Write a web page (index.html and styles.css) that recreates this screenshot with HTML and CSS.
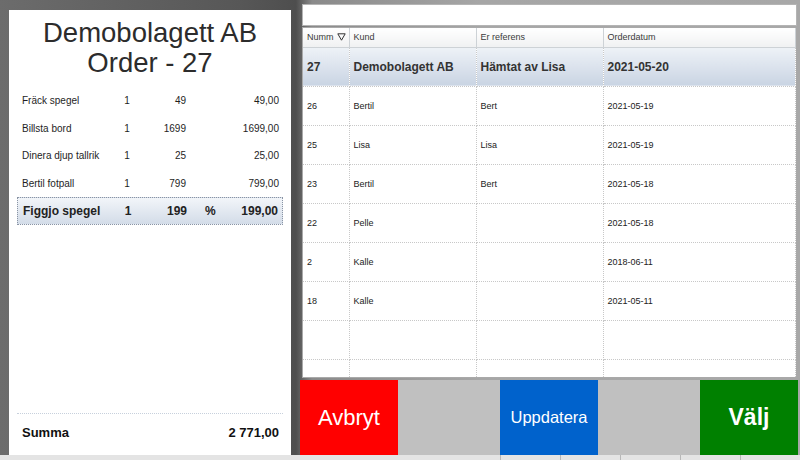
FILE: index.html
```html
<!DOCTYPE html>
<html lang="sv">
<head>
<meta charset="utf-8">
<title>Order</title>
<link rel="stylesheet" href="styles.css">
</head>
<body>
<div class="app">
  <section class="order">
    <h1 class="title">Demobolagett AB<br>Order - 27</h1>
    <div class="lines">
      <div class="line"><span class="name">Fräck spegel</span><span class="qty">1</span><span class="price">49</span><span class="pct"></span><span class="total">49,00</span></div>
      <div class="line"><span class="name">Billsta bord</span><span class="qty">1</span><span class="price">1699</span><span class="pct"></span><span class="total">1699,00</span></div>
      <div class="line"><span class="name">Dinera djup tallrik</span><span class="qty">1</span><span class="price">25</span><span class="pct"></span><span class="total">25,00</span></div>
      <div class="line"><span class="name">Bertil fotpall</span><span class="qty">1</span><span class="price">799</span><span class="pct"></span><span class="total">799,00</span></div>
      <div class="line active"><span class="name">Figgjo spegel</span><span class="qty">1</span><span class="price">199</span><span class="pct">%</span><span class="total">199,00</span></div>
    </div>
    <div class="sum"><span>Summa</span><span>2 771,00</span></div>
  </section>
  <section class="orders">
    <div class="search"></div>
    <div class="grid">
      <table>
        <colgroup><col class="c1"><col class="c2"><col class="c3"><col class="c4"></colgroup>
        <thead>
          <tr><th><span class="hd">Numm <svg class="filter" width="9" height="8" viewBox="0 0 9 8"><path d="M0.8 0.8 H8.2 L4.5 7.2 Z" fill="none" stroke="#333" stroke-width="1"/></svg></span></th><th>Kund</th><th>Er referens</th><th>Orderdatum</th></tr>
        </thead>
        <tbody>
          <tr class="sel"><td>27</td><td>Demobolagett AB</td><td>Hämtat av Lisa</td><td>2021-05-20</td></tr>
          <tr><td>26</td><td>Bertil</td><td>Bert</td><td>2021-05-19</td></tr>
          <tr><td>25</td><td>Lisa</td><td>Lisa</td><td>2021-05-19</td></tr>
          <tr><td>23</td><td>Bertil</td><td>Bert</td><td>2021-05-18</td></tr>
          <tr><td>22</td><td>Pelle</td><td></td><td>2021-05-18</td></tr>
          <tr><td>2</td><td>Kalle</td><td></td><td>2018-06-11</td></tr>
          <tr><td>18</td><td>Kalle</td><td></td><td>2021-05-11</td></tr>
          <tr><td></td><td></td><td></td><td></td></tr>
          <tr><td></td><td></td><td></td><td></td></tr>
        </tbody>
      </table>
    </div>
    <div class="buttons">
      <button class="btn cancel">Avbryt</button>
      <span class="spacer"></span>
      <button class="btn update">Uppdatera</button>
      <span class="spacer"></span>
      <button class="btn choose">Välj</button>
    </div>
  </section>
</div>
<div class="status"><span></span><span></span><span></span><span></span><span></span></div>
</body>
</html>
```

FILE: styles.css
```css
* { box-sizing: border-box; }
html, body { margin: 0; padding: 0; }
body {
  width: 800px;
  height: 460px;
  overflow: hidden;
  font-family: "Liberation Sans", Arial, sans-serif;
  color: #222;
  background: linear-gradient(90deg, #6c6c6c 0%, #575757 30%, #4e4e4e 37%, #8a8a8a 39%, #a6a6a6 60%, #a8a8a8 100%);
}
.app {
  display: flex;
  height: 455px;
}
.order {
  margin: 10px 0 0 9px;
  width: 282px;
  height: 445px;
  background: #fff;
  display: flex;
  flex-direction: column;
  padding: 0 8px;
}
.title {
  margin: 8px 0 9px;
  font-size: 27.5px;
  line-height: 30px;
  font-weight: normal;
  text-align: center;
  color: #2c2c2c;
}
.lines { display: flex; flex-direction: column; }
.line {
  display: grid;
  grid-template-columns: 95px 20px 49px 40px 1fr;
  height: 27.5px;
  align-items: center;
  padding: 0 4px 0 5px;
  font-size: 10px;
  color: #1e1e1e;
}
.line .qty { text-align: center; }
.line .price { text-align: right; }
.line .pct { padding-left: 18px; }
.line .total { text-align: right; }
.line.active {
  font-size: 12px;
  font-weight: bold;
  color: #222;
  border: 1px dotted #8a94a4;
  background: linear-gradient(#f2f5f9, #d3dce8);
}
.line.active .name { font-size: 12px; }
.sum {
  margin-top: auto;
  margin-bottom: 5px;
  height: 37px;
  border-top: 1px dotted #c7d0dc;
  display: flex;
  justify-content: space-between;
  align-items: center;
  padding: 0 4px 0 5px;
  font-size: 13px;
  font-weight: bold;
  color: #111;
}
.orders {
  margin-left: 9px;
  width: 500px;
  display: flex;
  flex-direction: column;
}
.search {
  margin: 4px 3px 0 2px;
  height: 22px;
  background: #fff;
  border: 1px solid #b4b4b4;
}
.grid {
  margin: 1px 3px 0 2px;
  height: 351px;
  background: #fff;
  border: 1px solid #a9a9a9;
  overflow: hidden;
}
table {
  width: 100%;
  border-collapse: collapse;
  table-layout: fixed;
}
col.c1 { width: 46px; }
col.c2 { width: 127px; }
col.c3 { width: 127px; }
th {
  height: 19px;
  padding: 0 0 0 4px;
  text-align: left;
  font-weight: normal;
  font-size: 9px;
  color: #3a3a3a;
  background: linear-gradient(#ffffff, #f0f1f2);
  border: 1px solid #cdd2d6;
  border-top: none;
}
th:first-child { border-left: none; }
th:last-child { border-right: 1px solid #cdd2d6; }
.hd { display: flex; align-items: center; justify-content: space-between; padding-right: 3px; }
.filter { display: block; }
td {
  height: 39px;
  padding: 0 0 0 4px;
  font-size: 9px;
  color: #222;
  border: 1px dotted #c8c8c8;
  white-space: nowrap;
  overflow: hidden;
}
td:first-child { border-left: none; }
tr.sel td {
  height: 39px;
  font-size: 12px;
  font-weight: bold;
  color: #333;
  background: linear-gradient(#eef2f7, #c9d4e3);
  border-top: none;
}
.buttons {
  margin-top: 2px;
  height: 75px;
  display: flex;
  background: #c0c0c0;
  margin-right: 2px;
}
.btn {
  border: none;
  margin: 0;
  width: 98px;
  height: 75px;
  color: #fff;
  font-family: "Liberation Sans", Arial, sans-serif;
  padding: 0;
}
.spacer { flex: 1; }
.cancel { background: #ff0000; font-size: 22px; }
.update { background: #0062cc; font-size: 16.5px; }
.choose { background: #008000; font-size: 23px; font-weight: bold; width: 98px; }
.status {
  height: 5px;
  background: #e4e4e4;
  display: flex;
  justify-content: flex-end;
}
.status span {
  width: 60px;
  border-left: 1px solid #b8b8b8;
}
```
